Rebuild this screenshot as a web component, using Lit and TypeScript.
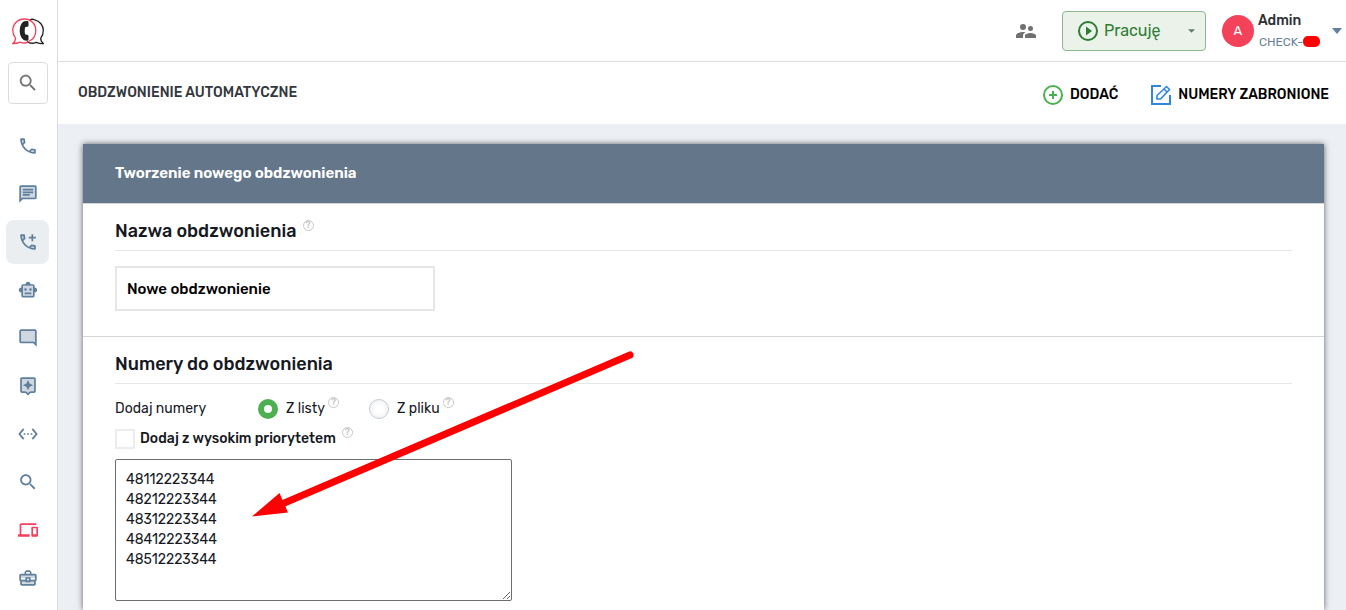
import { LitElement, html, css, svg, nothing } from "lit";
import { customElement, property, state } from "lit/decorators.js";

const icons: Record<string, unknown> = {
  call: svg`<path opacity=".3" d="M15.2 18.2c1.2.4 2.5.6 3.8.7v-1.5l-2.5-.5zM6.500 5H5c.1 1.300.3 2.600.7 3.800l1.200-1.200z"/><path d="M20 15.500c-1.250 0-2.450-.2-3.570-.57-.35-.11-.74-.03-1.020.24l-2.200 2.200c-2.830-1.440-5.150-3.750-6.590-6.590l2.200-2.200c.28-.28.36-.67.25-1.020C8.700 6.450 8.500 5.250 8.500 4c0-.55-.45-1-1-1H4c-.55 0-1 .45-1 1 0 9.390 7.610 17 17 17 .55 0 1-.45 1-1v-3.500c0-.55-.45-1-1-1zM5.030 5h1.500c.07.88.22 1.750.46 2.590L5.790 8.800c-.41-1.210-.67-2.480-.76-3.800zM19 18.970c-1.320-.09-2.600-.35-3.800-.76l1.200-1.200c.85.24 1.720.39 2.600.45z"/>`,
  chat: svg`<path opacity=".3" d="M4 17.170 5.170 16H20V4H4z"/><path d="M20 2H4c-1.100 0-2 .9-2 2v18l4-4h14c1.100 0 2-.9 2-2V4c0-1.100-.9-2-2-2zm0 14H5.170L4 17.170V4h16zM6 12h8v2H6zm0-3h12v2H6zm0-3h12v2H6z"/>`,
  addCall: svg`<path opacity=".3" d="M5 5c.1 1.300.3 2.600.7 3.800L7 7.600 6.500 5zm10.200 13.200c1.200.4 2.500.6 3.800.7v-1.500l-2.500-.5z"/><path d="M20 15.500c-1.250 0-2.450-.2-3.570-.57-.35-.11-.74-.03-1.020.24l-2.200 2.200c-2.830-1.440-5.150-3.750-6.590-6.590l2.200-2.200c.28-.28.36-.67.25-1.020C8.700 6.450 8.500 5.250 8.500 4c0-.55-.45-1-1-1H4c-.55 0-1 .45-1 1 0 9.390 7.610 17 17 17 .55 0 1-.45 1-1v-3.500c0-.55-.45-1-1-1zM5.030 5h1.500c.07.88.22 1.750.46 2.590L5.790 8.800c-.41-1.210-.67-2.480-.76-3.800zM19 18.970c-1.320-.09-2.600-.35-3.800-.76l1.200-1.200c.85.24 1.720.39 2.600.45zM18 11V8h3V6h-3V3h-2v3h-3v2h3v3z"/>`,
  robot: svg`<path opacity=".3" d="M6 7h12v12H6z"/><path d="M20 9V7c0-1.100-.9-2-2-2h-3c0-1.660-1.340-3-3-3S9 3.340 9 5H6c-1.100 0-2 .9-2 2v2c-1.660 0-3 1.340-3 3s1.340 3 3 3v4c0 1.100.9 2 2 2h12c1.100 0 2-.9 2-2v-4c1.660 0 3-1.340 3-3s-1.340-3-3-3zm-2 10H6V7h12zm-9-6c-.83 0-1.500-.67-1.500-1.500S8.170 10 9 10s1.500.67 1.500 1.500S9.830 13 9 13zm7.500-1.500c0 .83-.67 1.500-1.500 1.500s-1.500-.67-1.500-1.500.67-1.500 1.500-1.500 1.500.67 1.500 1.500zM8 15h8v2H8z"/>`,
  comment: svg`<path opacity=".3" d="M20 17.170V4H4v12h14.830z"/><path d="M4 18h14l4 4V4c0-1.100-.9-2-2-2H4c-1.100 0-2 .9-2 2v12c0 1.100.9 2 2 2zM4 4h16v13.170L18.830 16H4z"/>`,
  assistant: svg`<path opacity=".3" d="M5 18h4.830L12 20.170 14.170 18H19V4H5z"/><path d="M19 2H5c-1.100 0-2 .9-2 2v14c0 1.100.9 2 2 2h4l3 3 3-3h4c1.100 0 2-.9 2-2V4c0-1.100-.9-2-2-2zm0 16h-4.830L12 20.170 9.830 18H5V4h14zm-7-1 1.880-4.120L18 11l-4.120-1.880L12 5l-1.880 4.120L6 11l4.120 1.880z"/>`,
  ethernet: svg`<path d="M7.770 6.760 6.230 5.480.82 12l5.410 6.520 1.540-1.280L3.420 12zM7 13h2v-2H7zm10-2h-2v2h2zm-6 2h2v-2h-2zm6.770-7.520-1.540 1.280L20.580 12l-4.350 5.240 1.540 1.280L23.180 12z"/>`,
  search: svg`<path d="M15.500 14h-.79l-.28-.27C15.410 12.590 16 11.110 16 9.500 16 5.910 13.090 3 9.500 3S3 5.910 3 9.500 5.910 16 9.500 16c1.610 0 3.090-.59 4.230-1.570l.27.28v.79l5 4.990L20.490 19zm-6 0C7.010 14 5 11.990 5 9.500S7.010 5 9.500 5 14 7.010 14 9.500 11.990 14 9.500 14z"/>`,
  devices: svg`<path d="M4 6h18V4H4c-1.100 0-2 .9-2 2v11H0v3h14v-3H4zm19 2h-6c-.55 0-1 .45-1 1v10c0 .55.45 1 1 1h6c.55 0 1-.45 1-1V9c0-.55-.45-1-1-1zm-1 9h-4v-7h4z"/>`,
  briefcase: svg`<path opacity=".3" d="M4 8h16v4H4zm0 6h16v5H4z"/><path d="M20 7h-4V5l-2-2h-4L8 5v2H4c-1.100 0-2 .9-2 2v5c0 .75.400 1.380 1 1.730V19c0 1.110.89 2 2 2h14c1.110 0 2-.89 2-2v-3.280c.59-.35 1-.99 1-1.720V9c0-1.100-.9-2-2-2zM10 5h4v2h-4zM4 9h16v5h-5v-3H9v3H4zm9 6h-2v-2h2zm6 4H5v-3h4v1h6v-1h4z"/>`,
  people: svg`<path d="M16.500 12a2.500 2.500 0 1 0 0-5 2.500 2.500 0 0 0 0 5zM9 11a3 3 0 1 0 0-6 3 3 0 0 0 0 6zm7.500 3c-1.830 0-5.500.92-5.500 2.750V19h11v-2.250c0-1.830-3.670-2.750-5.500-2.750zM9 13c-2.330 0-7 1.170-7 3.500V19h7v-2.250c0-.85.33-2.340 2.370-3.470C10.500 13.100 9.660 13 9 13z"/>`,
};

@customElement("ui-icon")
export class UiIcon extends LitElement {
  @property() name = "";
  @property() box = "0 0 24 24";

  static styles = css`
    :host { display: block; width: 20px; height: 20px; flex: none; }
    .glyph { display: block; width: 100%; height: 100%; fill: currentColor; overflow: visible; }
  `;

  render() {
    return html`<svg class="glyph" viewBox=${this.box} aria-hidden="true">${icons[this.name] ?? nothing}</svg>`;
  }
}

@customElement("app-sidebar")
export class AppSidebar extends LitElement {
  @state() private active = "addCall";

  private items = [
    { icon: "call", label: "Połączenia" },
    { icon: "chat", label: "Wiadomości" },
    { icon: "addCall", label: "Obdzwonienie automatyczne" },
    { icon: "robot", label: "Robot" },
    { icon: "comment", label: "Czat" },
    { icon: "assistant", label: "Asystent" },
    { icon: "ethernet", label: "Integracje" },
    { icon: "search", label: "Wyszukiwanie" },
    { icon: "devices", label: "Urządzenia" },
    { icon: "briefcase", label: "Firma" },
  ];

  static styles = css`
    :host {
      display: flex; flex-direction: column; flex: none; box-sizing: border-box;
      width: 58px; background: #fff; border-right: 1px solid #dcdcdc;
    }
    .logo { display: block; width: 32px; height: 28px; margin: 17px 0 17px 12px; }
    .find {
      display: flex; align-items: center; justify-content: center; box-sizing: border-box;
      width: 40px; height: 42px; margin: 0 0 0 8px; padding: 0;
      background: #fff; border: 1px solid #dcdcdc; border-radius: 4px; color: #757575;
    }
    .find ui-icon { width: 22px; height: 22px; }
    .nav { display: flex; flex-direction: column; gap: 4px; padding: 20px 0 0 6px; }
    .item {
      display: flex; align-items: center; box-sizing: border-box;
      width: 43px; height: 44px; padding: 0 0 0 12px; border-radius: 8px; color: #5f7f9b;
    }
    .item.active { background: #eaeef1; }
    .item.alert { color: #f4405c; }
  `;

  render() {
    return html`
      <svg class="logo" viewBox="0 0 32 28" fill="none" aria-hidden="true">
        <path d="M17.500 3.500C19 2.200 21 2 22.500 2.800 28 4 31.300 8.500 31.300 13.500c0 3.500-1.300 6-2.600 7.800.1 2.300.8 4.200 2.800 5.200-3 .3-5.500-.4-7.300-1.200-3 1.400-6.700 1-9.200-.8" stroke="#222" stroke-width="1.300"/>
        <path d="M16.500 24.500C21 22.500 23.800 18.300 23.800 13.400 23.800 7 18.700 2 12.300 2S.8 7 .8 13.300c0 3 1 5.700 2.700 7.600-.1 2.600-1 4.600-2.700 5.700 3 .1 5.300-.6 7.200-1.500 2.500 1.100 5.600 1.100 8 .1" stroke="#f4405c" stroke-width="1.300"/>
        <path d="M12 4.300 15 4c1 0 1.500.5 1.500 1.500v3c0 .8-.5 1.200-1.300 1.300l-1.900.2c-.8 2.400-.8 5.200 0 7.600l1.900.2c.8.1 1.300.5 1.300 1.300v3.200c0 1-.5 1.500-1.500 1.500l-3-.5C6.300 20 6.300 7.500 12 4.300z" fill="#222"/>
      </svg>
      <button class="find" aria-label="Szukaj"><ui-icon name="search"></ui-icon></button>
      <nav class="nav">
        ${this.items.map(
          (i) => html`<a
            class="item ${i.icon === this.active ? "active" : ""} ${i.icon === "devices" ? "alert" : ""}"
            href="#${i.icon}"
            aria-label=${i.label}
            @click=${() => (this.active = i.icon)}
            ><ui-icon name=${i.icon} box=${i.icon === "devices" || i.icon === "robot" ? "0 0 24 24" : "0.5 0.5 23 23"}></ui-icon
          ></a>`
        )}
      </nav>
    `;
  }
}

@customElement("app-topbar")
export class AppTopbar extends LitElement {
  static styles = css`
    :host {
      display: flex; align-items: center; justify-content: flex-end; flex: none; box-sizing: border-box;
      height: 62px; padding: 0 4px 0 16px; background: #fff; border-bottom: 1px solid #dcdcdc;
    }
    button { font-family: inherit; cursor: pointer; }
    .people { padding: 0; border: 0; background: none; color: #707070; margin-right: 24px; }
    .people ui-icon { width: 24px; height: 24px; }
    .status {
      display: flex; align-items: center; box-sizing: border-box; width: 144px; height: 40px;
      padding: 0 10px 0 15px; margin-right: 16px; gap: 6px;
      background: #eaf2ea; border: 1px solid #8bb98d; border-radius: 4px; color: #2e7d32;
      font-size: 16px; line-height: 20px; text-align: left;
    }
    .play { width: 20px; height: 20px; flex: none; }
    .word { flex: 1; }
    .small-caret { width: 7px; height: 4px; color: #667a68; }
    .account {
      display: flex; align-items: center; padding: 0; border: 0; background: none; text-align: left;
    }
    .avatar {
      display: flex; align-items: center; justify-content: center; width: 32px; height: 32px;
      border-radius: 50%; background: #f3425a; color: #fff; font-size: 13px; margin-right: 4px;
    }
    .who { display: flex; flex-direction: column; margin-right: 12px; }
    .name { font-size: 14px; line-height: 22px; font-weight: 500; color: #2d3035; }
    .org { display: flex; align-items: center; padding-left: 1px; font-size: 12px; line-height: 20px; color: #6a8299; }
    .mask { width: 17px; height: 11px; border-radius: 5px; background: #f00; }
    .caret { width: 10px; height: 6px; color: #5f7f9b; }
  `;

  render() {
    return html`
      <button class="people" aria-label="Zespół"><ui-icon name="people"></ui-icon></button>
      <button class="status">
        <svg class="play" viewBox="0 0 20 20" fill="none" aria-hidden="true">
          <circle cx="10" cy="10" r="9" stroke="currentColor" stroke-width="2" />
          <path d="M8 5.500 14 10l-6 4.500z" fill="currentColor" />
        </svg>
        <span class="word">Pracuję</span>
        <svg class="small-caret" viewBox="0 0 8 4" aria-hidden="true"><path d="M0 0h8L4 4z" fill="currentColor" /></svg>
      </button>
      <button class="account">
        <span class="avatar">A</span>
        <span class="who">
          <span class="name">Admin</span>
          <span class="org">CHECK-<span class="mask"></span></span>
        </span>
        <svg class="caret" viewBox="0 0 10 6" aria-hidden="true"><path d="M0 0h10L5 6z" fill="currentColor" /></svg>
      </button>
    `;
  }
}

@customElement("help-tip")
export class HelpTip extends LitElement {
  static styles = css`
    :host {
      display: inline-flex; align-items: center; justify-content: center; box-sizing: border-box;
      width: 11px; height: 11px; border: 1px solid #c8c8c8; border-radius: 50%;
      font-size: 9px; line-height: 9px; font-weight: 500; color: #c4c4c4; flex: none;
    }
  `;
  render() {
    return html`?`;
  }
}

@customElement("app-root")
export class AppRoot extends LitElement {
  @state() private source = "list";

  private numbers = ["48112223344", "48212223344", "48312223344", "48412223344", "48512223344"].join("\n");

  static styles = css`
    :host {
      display: flex; height: 100vh; overflow: hidden;
      font-family: Rubik, Roboto, "Liberation Sans", sans-serif; color: #16191f; background: #eceff4;
    }
    .page { display: flex; flex-direction: column; flex: 1; min-width: 0; }
    .bar {
      display: flex; align-items: center; box-sizing: border-box; flex: none;
      height: 62px; padding: 0 17px 0 20px; background: #fff;
    }
    .title { flex: 1; margin: 0; font-size: 14px; line-height: 20px; font-weight: 500; color: #34373d; }
    .actions { display: flex; gap: 33px; padding-top: 4px; }
    .action {
      display: flex; align-items: center; gap: 7px; padding: 0; border: 0; background: none; cursor: pointer;
      font-family: inherit; font-size: 14px; line-height: 20px; font-weight: 500; color: #000;
    }
    .mark { width: 20px; height: 20px; flex: none; }
    .content { display: flex; flex: 1; min-height: 0; padding: 20px 22px 0 25px; }
    .card { flex: 1; min-width: 0; background: #fff; box-shadow: 0 0 6px rgba(0, 0, 0, 0.6); }
    .head {
      padding: 19px 32px 20px; background: #64768a; border-bottom: 1px solid #d2d6da;
      margin: 0; font-size: 15px; line-height: 20px; font-weight: 600; color: #fff;
    }
    .section { position: relative; padding: 15px 32px 25px; border-bottom: 1px solid #d4d4d4; }
    .section:last-child { border-bottom: 0; }
    .heading {
      display: flex; gap: 6px; margin: 0 0 15px; padding-bottom: 6px; border-bottom: 1px solid #e6e6e6;
      font-size: 18px; line-height: 25px; font-weight: 500;
    }
    .heading help-tip { margin-top: 1px; }
    .name {
      display: block; box-sizing: border-box; width: 320px; height: 45px; padding: 0 10px;
      border: 2px solid #e6e6e6; background: #fff; outline: 0;
      font-family: inherit; font-size: 15px; font-weight: 500; color: #000;
    }
    .row { display: flex; align-items: center; height: 20px; margin-bottom: 10px; font-size: 14px; line-height: 20px; }
    .caption { width: 143px; }
    .choice { display: flex; align-items: center; gap: 8px; }
    .row help-tip { margin: 0 0 14px 3px; }
    .row .priority + help-tip { margin-left: 6px; }
    .row .choice + help-tip + .choice { margin-left: 30px; }
    .radio {
      appearance: none; box-sizing: border-box; width: 20px; height: 20px; margin: 0;
      border: 1px solid #c3ccd6; border-radius: 50%; background: radial-gradient(#fff 30%, #ebebeb);
    }
    .radio:checked { border: 6px solid #4caf50; background: #fff; }
    .tick {
      appearance: none; box-sizing: border-box; width: 20px; height: 20px; margin: 0;
      border: 2px solid #ececec; background: #fff;
    }
    .priority { display: flex; align-items: center; gap: 5px; font-weight: 500; }
    .numbers {
      display: block; box-sizing: border-box; width: 397px; max-width: 100%; height: 142px; padding: 10px;
      border: 1px solid #6e6e6e; border-radius: 2px; background: #fff; outline: 0; resize: both;
      font-family: inherit; font-size: 14px; line-height: 20px; color: #16191f;
    }
    .arrow { position: absolute; left: 160px; top: 8px; width: 400px; height: 180px; pointer-events: none; }
  `;

  render() {
    return html`
      <app-sidebar></app-sidebar>
      <div class="page">
        <app-topbar></app-topbar>
        <header class="bar">
          <h1 class="title">OBDZWONIENIE AUTOMATYCZNE</h1>
          <div class="actions">
            <button class="action">
              <svg class="mark" viewBox="0 0 20 20" fill="none" stroke="#4caf50" stroke-width="2" aria-hidden="true">
                <circle cx="10" cy="10" r="9" />
                <path d="M10 6v8M6 10h8" />
              </svg>
              DODAĆ
            </button>
            <button class="action">
              <svg class="mark" viewBox="0 0 20 20" fill="none" stroke="#2f86de" stroke-width="2" aria-hidden="true">
                <path d="M10 1H1v18h18v-9" />
                <path d="M6 14v-3.500L15.500 1.500 18.500 4.500 9.500 14zM13 4l3 3" stroke-width="1.600" />
              </svg>
              NUMERY ZABRONIONE
            </button>
          </div>
        </header>
        <main class="content">
          <div class="card">
            <h2 class="head">Tworzenie nowego obdzwonienia</h2>
            <section class="section">
              <h3 class="heading"><label for="name">Nazwa obdzwonienia</label><help-tip></help-tip></h3>
              <input id="name" class="name" type="text" value="Nowe obdzwonienie" />
            </section>
            <section class="section">
              <h3 class="heading">Numery do obdzwonienia</h3>
              <div class="row" role="radiogroup" aria-labelledby="source">
                <span class="caption" id="source">Dodaj numery</span>
                <label class="choice">
                  <input class="radio" type="radio" name="source" .checked=${this.source === "list"} @change=${() => (this.source = "list")} />Z listy
                </label>
                <help-tip></help-tip>
                <label class="choice">
                  <input class="radio" type="radio" name="source" .checked=${this.source === "file"} @change=${() => (this.source = "file")} />Z pliku
                </label>
                <help-tip></help-tip>
              </div>
              <div class="row">
                <label class="priority"><input class="tick" type="checkbox" />Dodaj z wysokim priorytetem</label>
                <help-tip></help-tip>
              </div>
              <textarea class="numbers" aria-label="Numery do obdzwonienia" .value=${this.numbers}></textarea>
              <svg class="arrow" viewBox="243 345 400 180" aria-hidden="true">
                <path d="M630 355Q450 432 282 504" fill="none" stroke="#f00" stroke-width="7" stroke-linecap="round" />
                <path d="M252 516.500 279.500 493 288 512.500z" fill="#f00" />
              </svg>
            </section>
          </div>
        </main>
      </div>
    `;
  }
}
